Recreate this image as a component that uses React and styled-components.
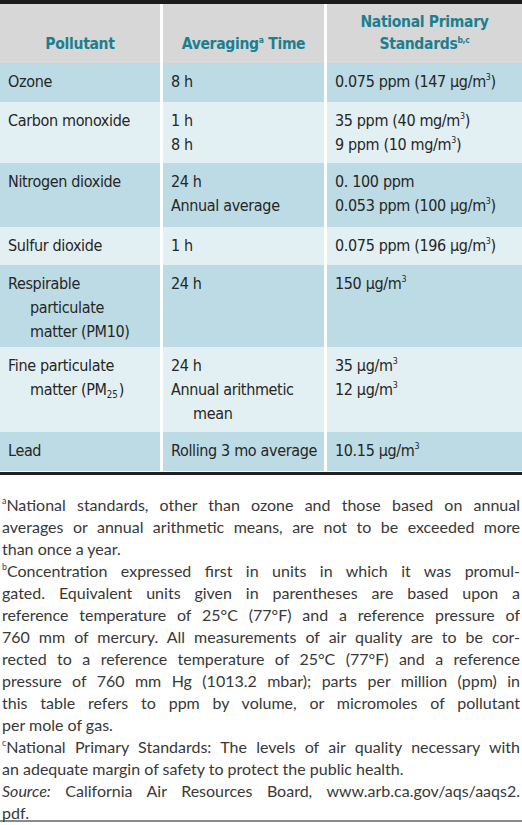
import React from 'react'
import styled, { createGlobalStyle, css } from 'styled-components'

const GlobalStyle = createGlobalStyle`
  html, body {
    margin: 0;
    padding: 0;
    background: #ffffff;
  }
`

const Page = styled.div`
  width: 522px;
  background: #ffffff;
`

const Table = styled.div`
  display: grid;
  grid-template-columns: 160px 161px 1fr;
  grid-template-rows: 59px 39px 61px 64px 38px 82px 85px 39px;
  column-gap: 3px;
  border-top: 4px solid #1c1c1c;
  padding-bottom: 1px;
  border-bottom: 3px solid #222222;
  font-family: "DejaVu Sans", "Liberation Sans", sans-serif;
  font-stretch: condensed;
`

const tones = {
  head: '#d7d7d7',
  dark: '#bcdbe4',
  light: '#e2f0f4',
}

const HeadCell = styled.div`
  background: ${tones.head};
  color: #1c7f8f;
  font-weight: bold;
  font-size: 15.5px;
  letter-spacing: -0.3px;
  line-height: 22px;
  text-align: center;
  display: flex;
  flex-direction: column;
  justify-content: flex-end;
  padding: 0 6px 8px;
`

const Cell = styled.div`
  background: ${p => tones[p.$tone]};
  color: #262626;
  font-size: 16px;
  letter-spacing: -0.35px;
  line-height: 24px;
  padding: 7px ${p => (p.$first ? '20px' : '4px')} 0 8px;

  ${p => p.$hang && css`
    padding-left: 30px;
    text-indent: -22px;
  `}
`

const Sup = styled.sup`
  font-size: 0.55em;
  line-height: 0;
  vertical-align: 0.75em;
`

const Sub = styled.sub`
  font-size: 0.6em;
  line-height: 0;
  letter-spacing: 0;
  vertical-align: -0.3em;
  margin-right: 1px;
`

const Notes = styled.div`
  margin-top: 19px;
  height: 326px;
  border-bottom: 2px solid #8a8a8a;
  font-family: Lato, "Open Sans", sans-serif;
  font-size: 16px;
  color: #383838;
  padding: 0 2px;
`

const Line = styled.div`
  line-height: 22px;
  height: 22px;
  text-align: justify;
  text-align-last: ${p => (p.$last ? 'left' : 'justify')};
  overflow: hidden;
`

const Em = styled.i`
  font-style: italic;
`

const ug = <>&#956;g/m<Sup>3</Sup></>

const rows = [
  { tone: 'dark', a: ['Ozone'], b: ['8 h'], c: [<>0.075 ppm (147 {ug})</>] },
  { tone: 'light', a: ['Carbon monoxide'], b: ['1 h', '8 h'], c: [<>35 ppm (40 mg/m<Sup>3</Sup>)</>, <>9 ppm (10 mg/m<Sup>3</Sup>)</>] },
  { tone: 'dark', a: ['Nitrogen dioxide'], b: ['24 h', 'Annual average'], c: ['0. 100 ppm', <>0.053 ppm (100 {ug})</>] },
  { tone: 'light', a: ['Sulfur dioxide'], b: ['1 h'], c: [<>0.075 ppm (196 {ug})</>] },
  { tone: 'dark', a: ['Respirable particulate matter (PM10)'], b: ['24 h'], c: [<>150 {ug}</>], hang: true },
  { tone: 'light', a: [<>Fine particulate matter (PM<Sub>25</Sub>)</>], b: ['24 h', 'Annual arithmetic mean'], c: [<>35 {ug}</>, <>12 {ug}</>], hang: true },
  { tone: 'dark', a: ['Lead'], b: ['Rolling 3 mo average'], c: [<>10.15 {ug}</>] },
]

const Block = styled.div`
  padding-left: 22px;
  text-indent: -22px;
`

const Lines = ({ items }) => items.map((t, i) => <Block key={i}>{t}</Block>)

const notes = [
  [<><Sup>a</Sup>National standards, other than ozone and those based on annual</>],
  ['averages or annual arithmetic means, are not to be exceeded more'],
  ['than once a year.', true],
  [<><Sup>b</Sup>Concentration expressed first in units in which it was promul-</>],
  ['gated. Equivalent units given in parentheses are based upon a'],
  ['reference temperature of 25°C (77°F) and a reference pressure of'],
  ['760 mm of mercury. All measurements of air quality are to be cor-'],
  ['rected to a reference temperature of 25°C (77°F) and a reference'],
  ['pressure of 760 mm Hg (1013.2 mbar); parts per million (ppm) in'],
  ['this table refers to ppm by volume, or micromoles of pollutant'],
  ['per mole of gas.', true],
  [<><Sup>c</Sup>National Primary Standards: The levels of air quality necessary with</>],
  ['an adequate margin of safety to protect the public health.', true],
  [<><Em>Source:</Em> California Air Resources Board, www.arb.ca.gov/aqs/aaqs2.</>],
  ['pdf.', true],
]

const App = () => {
  return (
    <Page>
      <GlobalStyle />
      <Table>
        <HeadCell>Pollutant</HeadCell>
        <HeadCell>
          <span>Averaging<Sup>a</Sup> Time</span>
        </HeadCell>
        <HeadCell>
          <span>National Primary</span>
          <span>Standards<Sup>b,c</Sup></span>
        </HeadCell>
        {rows.map((r, i) => (
          <React.Fragment key={i}>
            <Cell $tone={r.tone} $hang={r.hang} $first>{r.a}</Cell>
            <Cell $tone={r.tone}><Lines items={r.b} /></Cell>
            <Cell $tone={r.tone}><Lines items={r.c} /></Cell>
          </React.Fragment>
        ))}
      </Table>
      <Notes>
        {notes.map(([t, last], i) => (
          <Line key={i} $last={last}>{t}</Line>
        ))}
      </Notes>
    </Page>
  )
}

export default App
